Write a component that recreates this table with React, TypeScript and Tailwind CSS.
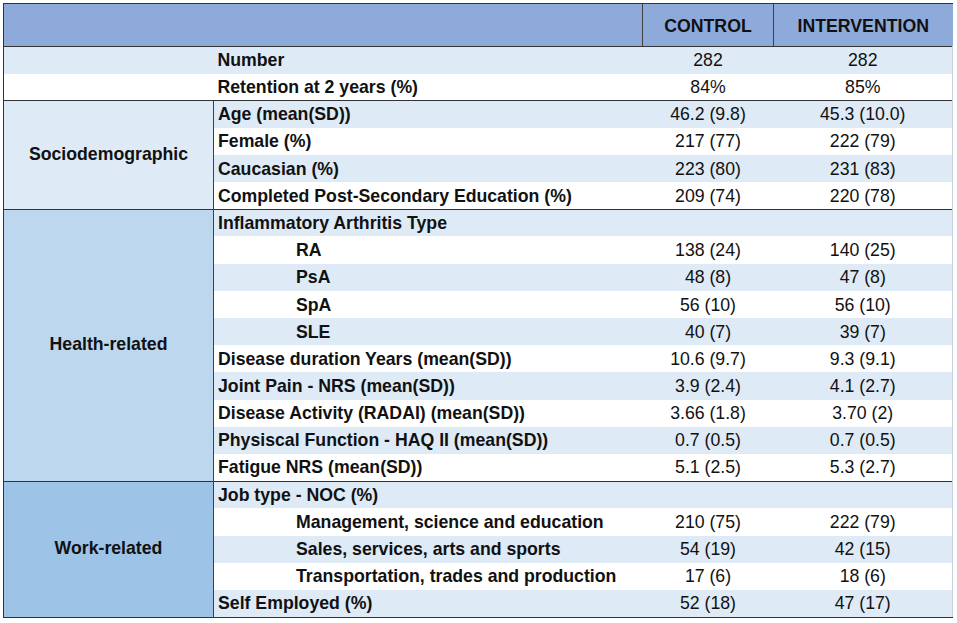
const font = { fontFamily: '"Liberation Sans", Arial, sans-serif' };

type Row = { label: string; indent?: boolean; control: string; intervention: string };

const top: Row[] = [
  { label: 'Number', control: '282', intervention: '282' },
  { label: 'Retention at 2 years (%)', control: '84%', intervention: '85%' },
];

const groups: { title: string; bg: string; rows: Row[] }[] = [
  {
    title: 'Sociodemographic',
    bg: 'bg-[#deeaf6]',
    rows: [
      { label: 'Age (mean(SD))', control: '46.2 (9.8)', intervention: '45.3 (10.0)' },
      { label: 'Female (%)', control: '217 (77)', intervention: '222 (79)' },
      { label: 'Caucasian (%)', control: '223 (80)', intervention: '231 (83)' },
      { label: 'Completed Post-Secondary Education (%)', control: '209 (74)', intervention: '220 (78)' },
    ],
  },
  {
    title: 'Health-related',
    bg: 'bg-[#bdd7ee]',
    rows: [
      { label: 'Inflammatory Arthritis Type', control: '', intervention: '' },
      { label: 'RA', indent: true, control: '138 (24)', intervention: '140 (25)' },
      { label: 'PsA', indent: true, control: '48 (8)', intervention: '47 (8)' },
      { label: 'SpA', indent: true, control: '56 (10)', intervention: '56 (10)' },
      { label: 'SLE', indent: true, control: '40 (7)', intervention: '39 (7)' },
      { label: 'Disease duration Years (mean(SD))', control: '10.6 (9.7)', intervention: '9.3 (9.1)' },
      { label: 'Joint Pain - NRS (mean(SD))', control: '3.9 (2.4)', intervention: '4.1 (2.7)' },
      { label: 'Disease Activity (RADAI) (mean(SD))', control: '3.66 (1.8)', intervention: '3.70 (2)' },
      { label: 'Physiscal Function - HAQ II (mean(SD))', control: '0.7 (0.5)', intervention: '0.7 (0.5)' },
      { label: 'Fatigue NRS (mean(SD))', control: '5.1 (2.5)', intervention: '5.3 (2.7)' },
    ],
  },
  {
    title: 'Work-related',
    bg: 'bg-[#9dc3e6]',
    rows: [
      { label: 'Job type - NOC (%)', control: '', intervention: '' },
      { label: 'Management, science and education', indent: true, control: '210 (75)', intervention: '222 (79)' },
      { label: 'Sales, services, arts and sports', indent: true, control: '54 (19)', intervention: '42 (15)' },
      { label: 'Transportation, trades and production', indent: true, control: '17 (6)', intervention: '18 (6)' },
      { label: 'Self Employed (%)', control: '52 (18)', intervention: '47 (17)' },
    ],
  },
];

const stripe = (i: number) => (i % 2 === 0 ? 'bg-[#deeaf6]' : 'bg-white');

const Values = ({ row }: { row: Row }) => (
  <>
    <td className="text-center pt-[2px]">{row.control}</td>
    <td className="text-center pt-[2px]">{row.intervention}</td>
  </>
);

const Label = ({ row }: { row: Row }) => (
  <td className={`font-bold pt-[2px] ${row.indent ? 'pl-[82px]' : 'pl-[4px]'}`}>{row.label}</td>
);

export default function App() {
  let idx = 2;
  return (
    <div className="bg-white w-[957px] h-[623px] pt-[3px] pl-[3px]" style={font}>
      <table className="table-fixed border-collapse w-[949px] text-[17.7px] leading-none text-[#111]">
        <colgroup>
          <col className="w-[210px]" />
          <col className="w-[429px]" />
          <col className="w-[131px]" />
          <col className="w-[179px]" />
        </colgroup>
        <thead>
          <tr className="h-[43px] bg-[#8eaadb] border-t border-l border-[#333]">
            <th colSpan={2} className="border-r border-[#3f3f3f]"></th>
            <th className="font-bold text-center pt-[3px] border-r border-[#3f3f3f]">CONTROL</th>
            <th className="font-bold text-center pt-[3px]">INTERVENTION</th>
          </tr>
        </thead>
        <tbody>
          {top.map((row, i) => (
            <tr
              key={row.label}
              className={`h-[27px] border-l border-r border-l-[#333] border-r-[#c8d3de] ${stripe(i)} ${
                i === 0 ? 'border-t border-t-[#333]' : ''
              }`}
            >
              <td></td>
              <Label row={row} />
              <Values row={row} />
            </tr>
          ))}
          {groups.map((g) =>
            g.rows.map((row, j) => {
              const i = idx++;
              return (
                <tr
                  key={row.label}
                  className={`h-[27.2px] border-l border-r border-l-[#333] border-r-[#c8d3de] ${stripe(i)} ${
                    j === 0 ? 'border-t border-t-[#333]' : ''
                  } ${i === 20 ? 'border-b border-b-[#333]' : ''}`}
                >
                  {j === 0 && (
                    <td rowSpan={g.rows.length} className={`${g.bg} border-r border-[#3f3f3f] text-center font-bold`}>
                      {g.title}
                    </td>
                  )}
                  <Label row={row} />
                  <Values row={row} />
                </tr>
              );
            }),
          )}
        </tbody>
      </table>
    </div>
  );
}
